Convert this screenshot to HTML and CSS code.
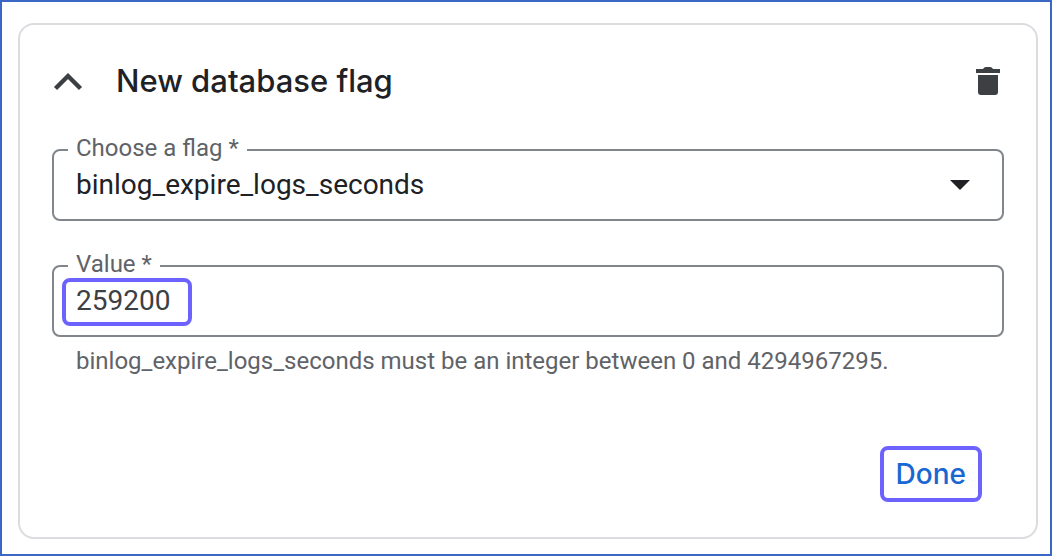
FILE: index.html
```html
<!DOCTYPE html>
<html lang="en">
<head>
<meta charset="utf-8">
<meta name="viewport" content="width=device-width, initial-scale=1">
<title>New database flag</title>
<link rel="stylesheet" href="styles.css">
</head>
<body>
<main class="page">
  <form class="card">
    <header class="card-header">
      <button class="icon-button" type="button" aria-label="Collapse">
        <svg width="32" height="32" viewBox="0 0 32 32" aria-hidden="true"><path d="M3.500 23.500L16 11l12.500 12.500" fill="none" stroke="#3c4043" stroke-width="4.400"/></svg>
      </button>
      <h1 class="title">New database flag</h1>
      <button class="icon-button" type="button" aria-label="Delete">
        <svg width="32" height="32" viewBox="0 0 32 32" aria-hidden="true"><path d="M4 4h7q1-2 3-2h4q2 0 3 2h7v4H4zM6 10h20v17q0 3-3 3H9q-3 0-3-3z" fill="#3c4043"/></svg>
      </button>
    </header>

    <fieldset class="field">
      <legend class="field-legend"><label for="flag">Choose a flag *</label></legend>
      <div class="control-wrap">
        <select class="control" id="flag">
          <option>binlog_expire_logs_seconds</option>
        </select>
        <svg class="arrow" width="20" height="10" viewBox="0 0 20 10" aria-hidden="true"><path d="M0 0h20L10 10z" fill="#202124"/></svg>
      </div>
    </fieldset>

    <fieldset class="field">
      <legend class="field-legend"><label for="value">Value *</label></legend>
      <div class="control-wrap">
        <input class="control control-value" id="value" type="text" value="259200" aria-describedby="hint">
        <span class="highlight"></span>
      </div>
    </fieldset>
    <p class="hint" id="hint">binlog_expire_logs_seconds must be an integer between 0 and 4294967295.</p>

    <footer class="actions">
      <button class="done" type="button">Done</button>
    </footer>
  </form>
</main>
</body>
</html>
```
FILE: styles.css
```css
* {
  box-sizing: border-box;
}

body {
  margin: 0;
  background: #fff;
  color: #202124;
  font-family: Roboto, "Liberation Sans", sans-serif;
}

.page {
  display: flex;
  min-height: 100vh;
  padding: 21px 12px 15px 16px;
  border: 2px solid #3b67c4;
}

.card {
  display: flex;
  flex: 1;
  flex-direction: column;
  min-width: 0;
  padding: 40px 32px 35px;
  border: 2px solid #dadce0;
  border-radius: 16px;
}

.card-header {
  display: flex;
  align-items: center;
  height: 32px;
  margin-bottom: 39px;
}

.icon-button {
  display: flex;
  padding: 0;
  border: 0;
  background: none;
}

.title {
  flex: 1;
  margin: 0 0 0 32px;
  font: 500 31px/32px Inter, Roboto, sans-serif;
}

.field {
  min-width: 0;
  margin: 0 0 31px;
  padding: 0 14px 13px;
  border: 2px solid #80868b;
  border-radius: 8px;
}

.field-legend {
  padding: 0 8px 4px;
  color: #5f6368;
  font-size: 24px;
  line-height: 24px;
}

.control-wrap {
  position: relative;
  display: flex;
}

.control {
  width: 100%;
  height: 42px;
  padding: 0 8px;
  border: 0;
  outline: 0;
  appearance: none;
  background: none;
  color: #202124;
  font: 400 28px/42px Roboto, sans-serif;
}

.control-value {
  color: #3c4043;
}

.arrow {
  position: absolute;
  top: 16px;
  right: 18px;
  pointer-events: none;
}

.highlight {
  position: absolute;
  top: -2px;
  left: -6px;
  width: 130px;
  height: 48px;
  border: 4px solid #6c63ff;
  border-radius: 8px;
  pointer-events: none;
}

.hint {
  margin: -23px 24px 0;
  color: #5f6368;
  font-size: 24px;
  line-height: 32px;
}

.actions {
  display: flex;
  justify-content: flex-end;
  margin-top: auto;
  padding-right: 22px;
}

.done {
  height: 56px;
  padding: 0 12px;
  border: 4px solid #6c63ff;
  border-radius: 8px;
  background: none;
  color: #1967d2;
  font: 500 28px/44px Inter, Roboto, sans-serif;
}
```
